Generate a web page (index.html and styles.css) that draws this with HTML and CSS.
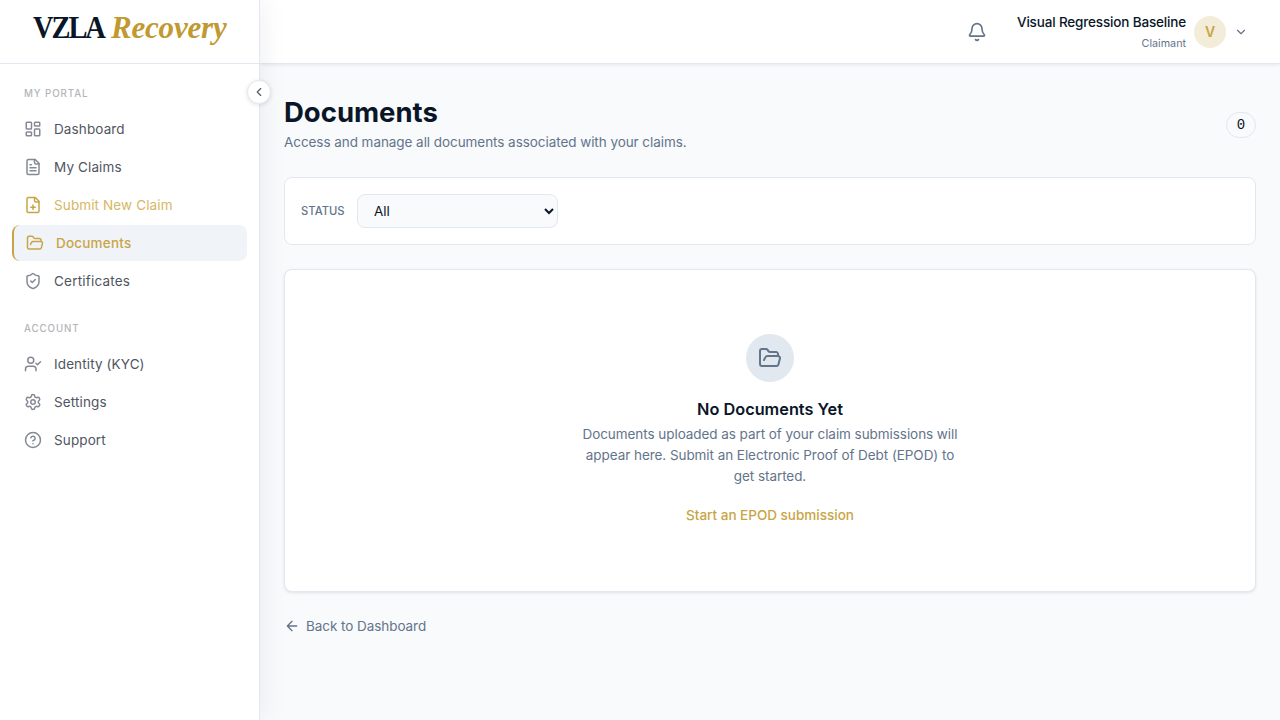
FILE: index.html
```html
<!DOCTYPE html>
<html lang="en">
<head>
<meta charset="utf-8">
<title>Documents - VZLA Recovery</title>
<link rel="stylesheet" href="styles.css">
</head>
<body>
<div class="app">
  <aside class="sidebar">
    <div class="brand"><span class="brand-main">VZLA</span><span class="brand-accent">Recovery</span></div>
    <button class="collapse" aria-label="Collapse sidebar"><svg class="icon" width="14" height="14" viewBox="0 0 24 24"><path d="m15 18-6-6 6-6"/></svg></button>
    <nav class="nav">
      <h2 class="nav-title portal">My Portal</h2>
      <a class="nav-item"><svg class="icon" viewBox="0 0 24 24"><rect x="3" y="3" width="7" height="9" rx="1"/><rect x="14" y="3" width="7" height="5" rx="1"/><rect x="14" y="12" width="7" height="9" rx="1"/><rect x="3" y="16" width="7" height="5" rx="1"/></svg><span>Dashboard</span></a>
      <a class="nav-item"><svg class="icon" viewBox="0 0 24 24"><path d="M15 2H6a2 2 0 0 0-2 2v16a2 2 0 0 0 2 2h12a2 2 0 0 0 2-2V7Z"/><path d="M14 2v4a2 2 0 0 0 2 2h4M10 9H8M16 13H8M16 17H8"/></svg><span>My Claims</span></a>
      <a class="nav-item highlight"><svg class="icon" viewBox="0 0 24 24"><path d="M15 2H6a2 2 0 0 0-2 2v16a2 2 0 0 0 2 2h12a2 2 0 0 0 2-2V7Z"/><path d="M14 2v4a2 2 0 0 0 2 2h4M9 15h6M12 18v-6"/></svg><span>Submit New Claim</span></a>
      <a class="nav-item active"><svg class="icon" viewBox="0 0 24 24"><path d="m6 14 1.5-2.9A2 2 0 0 1 9.24 10H20a2 2 0 0 1 1.94 2.5l-1.54 6a2 2 0 0 1-1.95 1.5H4a2 2 0 0 1-2-2V5a2 2 0 0 1 2-2h3.9a2 2 0 0 1 1.69.9l.81 1.2a2 2 0 0 0 1.67.9H18a2 2 0 0 1 2 2v2"/></svg><span>Documents</span></a>
      <a class="nav-item certificates"><svg class="icon" viewBox="0 0 24 24"><path d="M20 13c0 5-3.5 7.5-7.66 8.95a1 1 0 0 1-.67-.01C7.5 20.5 4 18 4 13V6a1 1 0 0 1 1-1c2 0 4.5-1.2 6.24-2.72a1.17 1.17 0 0 1 1.52 0C14.51 3.81 17 5 19 5a1 1 0 0 1 1 1z"/><path d="m9 12 2 2 4-4"/></svg><span>Certificates</span></a>
      <h2 class="nav-title account">Account</h2>
      <a class="nav-item"><svg class="icon" viewBox="0 0 24 24"><path d="m16 11 2 2 4-4M16 21v-2a4 4 0 0 0-4-4H6a4 4 0 0 0-4 4v2"/><circle cx="9" cy="7" r="4"/></svg><span>Identity (KYC)</span></a>
      <a class="nav-item"><svg class="icon" viewBox="0 0 24 24"><path d="M9.671 4.136a2.34 2.34 0 0 1 4.659 0 2.34 2.34 0 0 0 3.319 1.915 2.34 2.34 0 0 1 2.33 4.033 2.34 2.34 0 0 0 0 3.831 2.34 2.34 0 0 1-2.33 4.033 2.34 2.34 0 0 0-3.319 1.915 2.34 2.34 0 0 1-4.659 0 2.34 2.34 0 0 0-3.32-1.915 2.34 2.34 0 0 1-2.33-4.033 2.34 2.34 0 0 0 0-3.831A2.34 2.34 0 0 1 6.35 6.051a2.34 2.34 0 0 0 3.319-1.915"/><circle cx="12" cy="12" r="3"/></svg><span>Settings</span></a>
      <a class="nav-item"><svg class="icon" viewBox="0 0 24 24"><circle cx="12" cy="12" r="10"/><path d="M9.09 9a3 3 0 0 1 5.83 1c0 2-3 3-3 3M12 17h.01"/></svg><span>Support</span></a>
    </nav>
  </aside>
  <div class="content">
    <header class="topbar">
      <svg class="icon bell" width="20" height="20" viewBox="0 0 24 24"><path d="M10.268 21a2 2 0 0 0 3.464 0M3.262 15.326A1 1 0 0 0 4 17h16a1 1 0 0 0 .74-1.673C19.41 13.956 18 12.499 18 8A6 6 0 0 0 6 8c0 4.499-1.411 5.956-2.738 7.326"/></svg>
      <div class="user">
        <div class="user-text"><span class="user-name">Visual Regression Baseline</span><span class="user-role">Claimant</span></div>
        <div class="avatar">V</div>
        <svg class="icon chevron" width="14" height="14" viewBox="0 0 24 24"><path d="m6 9 6 6 6-6"/></svg>
      </div>
    </header>
    <main class="main">
      <div class="page-head">
        <div>
          <h1 class="title">Documents</h1>
          <p class="subtitle">Access and manage all documents associated with your claims.</p>
        </div>
        <span class="count">0</span>
      </div>
      <section class="filter">
        <label class="filter-label" for="status">Status</label>
        <select class="select" id="status"><option>All</option></select>
      </section>
      <section class="card">
        <div class="empty-icon"><svg class="icon" width="24" height="24" viewBox="0 0 24 24"><path d="m6 14 1.5-2.9A2 2 0 0 1 9.24 10H20a2 2 0 0 1 1.94 2.5l-1.54 6a2 2 0 0 1-1.95 1.5H4a2 2 0 0 1-2-2V5a2 2 0 0 1 2-2h3.9a2 2 0 0 1 1.69.9l.81 1.2a2 2 0 0 0 1.67.9H18a2 2 0 0 1 2 2v2"/></svg></div>
        <h3 class="empty-title">No Documents Yet</h3>
        <p class="empty-text">Documents uploaded as part of your claim submissions will<br>appear here. Submit an Electronic Proof of Debt (EPOD) to<br>get started.</p>
        <a class="empty-link">Start an EPOD submission</a>
      </section>
      <a class="back"><svg class="icon" width="16" height="16" viewBox="0 0 24 24"><path d="m12 19-7-7 7-7M19 12H5"/></svg><span>Back to Dashboard</span></a>
    </main>
  </div>
</div>
</body>
</html>
```
FILE: styles.css
```css
* { box-sizing: border-box; margin: 0; padding: 0; }
body { font-family: Inter, "Liberation Sans", sans-serif; font-size: 13.5px; background: #f8fafc; color: #0a1628; height: 720px; overflow: hidden; }
.icon { fill: none; stroke: currentColor; stroke-width: 2; stroke-linecap: round; stroke-linejoin: round; flex-shrink: 0; display: block; }
.app { display: flex; height: 720px; }
.sidebar { width: 260px; background: #fff; border-right: 1px solid #e2e8f0; box-shadow: 4px 0 24px rgba(10, 22, 40, 0.06); position: relative; z-index: 2; flex-shrink: 0; }
.brand { height: 64px; border-bottom: 1px solid #e2e8f0; display: flex; padding: 10px 0 0 33px; font: 700 31px/36px "Liberation Serif", serif; white-space: nowrap; }
.brand-main { width: 78px; letter-spacing: -2.3px; transform: scaleX(0.92); transform-origin: left; }
.brand-accent { color: #c09a30; font-style: italic; letter-spacing: -0.2px; }
.collapse { position: absolute; top: 80px; right: -12px; width: 24px; height: 24px; border-radius: 50%; border: 1px solid #e2e8f0; background: #fff; color: #555b66; display: flex; align-items: center; justify-content: center; box-shadow: 0 1px 4px rgba(10, 22, 40, 0.12); }
.nav { padding: 22px 12px; display: flex; flex-direction: column; gap: 2px; }
.nav-title { font-size: 9.75px; line-height: 15px; font-weight: 500; letter-spacing: 0.9px; text-transform: uppercase; color: #b3b5b9; padding-left: 12px; margin-bottom: 8px; }
.account { margin-top: 20px; }
.nav-item { height: 36px; border-radius: 8px; padding: 0 12px; display: flex; align-items: center; gap: 12px; color: #50555f; white-space: nowrap; letter-spacing: 0.12px; }
.nav-item .icon { width: 18px; height: 18px; color: #858992; }
.highlight { color: #d6b764; }
.nav-item.highlight .icon, .nav-item.active .icon { color: #c9a446; }
.active { background: #f0f4f9; border-left: 2px solid #c9a446; color: #c9a446; font-weight: 500; letter-spacing: 0.2px; }
.certificates { letter-spacing: 0.2px; }
.content { flex: 1; display: flex; flex-direction: column; }
.topbar { height: 64px; background: #fff; border-bottom: 1px solid #e2e8f0; box-shadow: 0 1px 3px rgba(10, 22, 40, 0.08); display: flex; align-items: center; justify-content: flex-end; gap: 30px; padding-right: 32px; color: #64748b; }
.user { display: flex; align-items: center; gap: 8px; }
.user-text { display: flex; flex-direction: column; align-items: flex-end; padding-top: 2px; }
.user-name { font-size: 13.5px; line-height: 21px; font-weight: 450; letter-spacing: -0.16px; color: #0a1628; }
.user-role { font-size: 10.75px; line-height: 21px; }
.avatar { width: 32px; height: 32px; border-radius: 50%; background: #f3ecd9; color: #c9a446; font-size: 14px; font-weight: 600; display: flex; align-items: center; justify-content: center; }
.main { padding: 32px 24px; }
.page-head { display: flex; align-items: center; justify-content: space-between; height: 57px; }
.title { font-size: 27.5px; line-height: 32px; font-weight: 650; }
.subtitle { line-height: 21px; margin-top: 4px; color: #64748b; letter-spacing: -0.06px; }
.count { width: 30px; height: 26px; border: 1px solid #e2e8f0; border-radius: 13px; display: flex; align-items: center; justify-content: center; padding-top: 1px; font: 500 14px "Liberation Mono", monospace; }
.filter { margin-top: 24px; height: 68px; background: #fff; border: 1px solid #e2e8f0; border-radius: 8px; padding: 0 16px; display: flex; align-items: center; gap: 12px; }
.filter-label { width: 44px; font-size: 11.25px; font-weight: 450; color: #64748b; text-transform: uppercase; }
.select { width: 201px; height: 34px; border: 1px solid #e2e8f0; border-radius: 8px; background: #f8fafc; padding: 0 0 0 12px; font: inherit; color: #0a1628; }
.card { margin-top: 24px; height: 323px; background: #fff; border: 1px solid #e2e8f0; border-radius: 8px; box-shadow: 0 1px 3px rgba(10, 22, 40, 0.1); display: flex; flex-direction: column; align-items: center; padding-top: 64px; }
.empty-icon { width: 48px; height: 48px; border-radius: 50%; background: #e2e8f0; color: #64748b; display: flex; align-items: center; justify-content: center; }
.empty-title { margin-top: 16px; font-size: 16.3px; line-height: 22px; font-weight: 600; }
.empty-text { margin-top: 4px; line-height: 21px; text-align: center; color: #64748b; white-space: nowrap; letter-spacing: -0.06px; }
.empty-link { margin-top: 18px; line-height: 21px; font-weight: 500; color: #c9a446; }
.back { margin-top: 23px; display: flex; align-items: center; gap: 6px; line-height: 22px; color: #64748b; letter-spacing: -0.06px; }
```
